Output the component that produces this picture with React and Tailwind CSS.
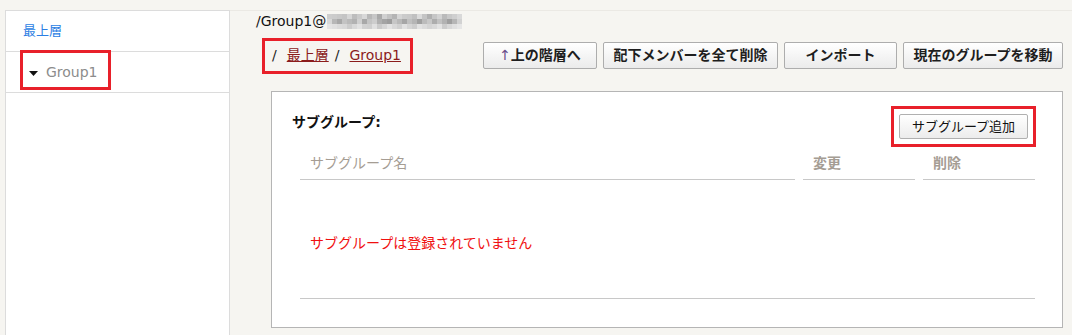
import React from 'react';

const font = { fontFamily: '"DejaVu Sans", "Noto Sans CJK JP", sans-serif' };

const actions = [
  { label: '上の階層へ', width: 'w-[114px]', arrow: true },
  { label: '配下メンバーを全て削除', width: 'w-[175px]' },
  { label: 'インポート', width: 'w-[113px]' },
  { label: '現在のグループを移動', width: 'w-[160px]' },
];

// blurred address mosaic
const mosaic = [
  'cdcbc8c4d6bdcad8b8c7a9d0c2b4d5cbc9c0dbc4b0c6d3bac8cfd9',
  'd8b7a8c3bab2d0a8c4cdb0a49dc6b9a6c0b5a0bbc8adc2b29fb6d2',
  'e4e0dbd8ccd9e2d1cfe0cbd6e3d8d0e1d5cde2dbd4d9e3ccd8e0e6',
];
const mosaicRows = mosaic.map((row) => row.match(/.{2}/g).map((h) => `#${h}${h}${h}`));

const Button = ({ children, className = '' }) => (
  <button
    className={`h-[27px] rounded-[2px] border border-[#adadad] bg-gradient-to-b from-white to-[#ebebeb] text-[14px] font-bold text-[#1e1e1e] ${className}`}
  >
    {children}
  </button>
);

const App = () => {
  return (
    <div className="flex h-[335px] w-[1072px] overflow-hidden bg-[#f6f5f1]" style={font}>
      {/* Sidebar */}
      <div className="ml-[5px] mt-[10px] h-[340px] w-[225px] border border-[#dcdcdc] bg-white">
        <div className="flex h-[41px] items-center border-b border-[#dcdcdc] pl-[17px] text-[13px] text-[#2b7ee3]">
          最上層
        </div>
        <div className="relative flex h-[41px] items-center border-b border-[#dcdcdc] pl-[23px]">
          <svg width="9" height="5" viewBox="0 0 9 5" className="mt-[3px]">
            <polygon points="0,0 9,0 4.5,5" fill="#111" />
          </svg>
          <span className="ml-[8px] text-[14px] text-[#8c8c8c]">Group1</span>
          <div className="absolute left-[14px] top-[-2px] h-[40px] w-[91px] border-[3px] border-[#e8202a]" />
        </div>
      </div>

      {/* Main */}
      <div className="flex flex-1 flex-col">
        <div className="mt-[10px] flex h-[21px] items-center border-t border-[#ebe9e4] pl-[26px] text-[14px] text-[#111]">
          <span>/Group1@</span>
          <div className="ml-[1px] flex flex-col">
            {mosaicRows.map((row, r) => (
              <div key={r} className="flex">
                {row.map((c, i) => (
                  <span key={i} className="h-[5px] w-[5px]" style={{ backgroundColor: c }} />
                ))}
              </div>
            ))}
          </div>
        </div>

        <div className="mt-[6px] flex h-[37px] items-center justify-between pr-[9px]">
          <div className="ml-[32px] flex h-[36px] w-[151px] items-center border-[3px] border-[#e8202a] px-[7px] text-[14px]">
            <span className="text-[#222]">/</span>
            <a className="ml-[10px] text-[#8b1c1c] underline">最上層</a>
            <span className="ml-[6px] text-[#222]">/</span>
            <a className="ml-[10px] text-[#8b1c1c] underline">Group1</a>
          </div>
          <div className="flex gap-[6px]">
            {actions.map((a) => (
              <Button key={a.label} className={a.width}>
                {a.arrow && <span className="font-normal text-[#6a4f8a]">↑</span>}
                {a.label}
              </Button>
            ))}
          </div>
        </div>

        {/* Panel */}
        <div className="ml-[41px] mr-[9px] mt-[17px] h-[237px] border border-[#b5b5b5] bg-white">
          <div className="mt-[14px] flex items-start justify-between pl-[20px] pr-[26px]">
            <span className="mt-[6px] text-[14px] font-bold leading-[20px] text-[#111]">サブグループ:</span>
            <div className="border-[3px] border-[#e8202a] p-[5px]">
              <button className="h-[25px] w-[129px] rounded-[2px] border border-[#b0b0b0] bg-gradient-to-b from-white to-[#ececec] text-[13px] text-[#111]">
                サブグループ追加
              </button>
            </div>
          </div>

          <div className="pl-[28px] pr-[27px]">
            <div className="flex gap-[8px] text-[14px] font-bold leading-[20px] text-[#a59d94]">
              <div className="w-[495px] border-b border-[#c8c8c8] py-[6px] pl-[10px] font-normal">サブグループ名</div>
              <div className="w-[112px] border-b border-[#c8c8c8] py-[6px] pl-[10px]">変更</div>
              <div className="w-[112px] border-b border-[#c8c8c8] py-[6px] pl-[10px]">削除</div>
            </div>
            <div className="border-b border-[#c8c8c8] pb-[45px] pl-[10px] pt-[53px] text-[14px] leading-[20px] text-[#f01010]">
              サブグループは登録されていません
            </div>
          </div>
        </div>
      </div>
    </div>
  );
};

export default App;
